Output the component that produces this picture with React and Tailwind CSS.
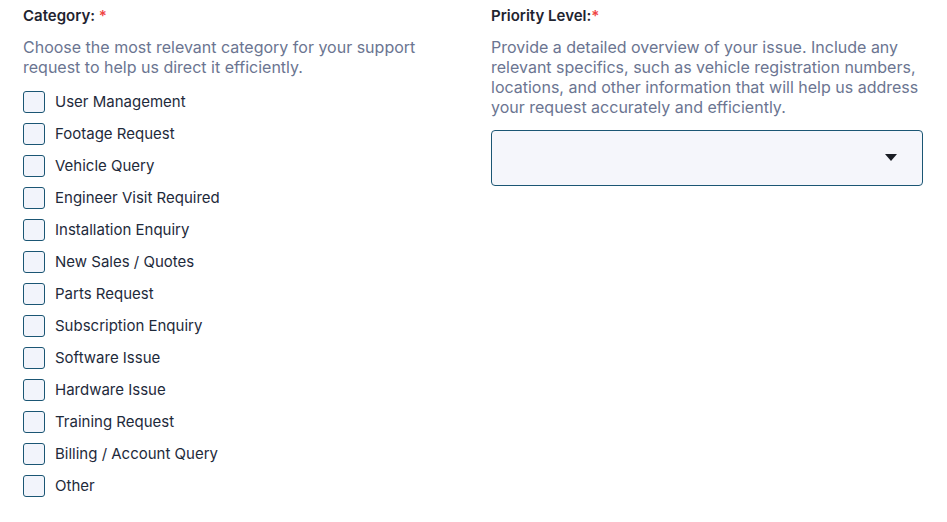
import React, { useState } from "react";

const categories = [
  "User Management",
  "Footage Request",
  "Vehicle Query",
  "Engineer Visit Required",
  "Installation Enquiry",
  "New Sales / Quotes",
  "Parts Request",
  "Subscription Enquiry",
  "Software Issue",
  "Hardware Issue",
  "Training Request",
  "Billing / Account Query",
  "Other",
];

export default function App() {
  const [checked, setChecked] = useState({});
  const [priority, setPriority] = useState("");

  const toggle = (name) => {
    setChecked((prev) => ({ ...prev, [name]: !prev[name] }));
  };

  return (
    <div
      className="min-h-screen bg-white pl-[23px] pr-[24px] pt-[6px]"
      style={{ fontFamily: "Inter, 'Noto Sans', sans-serif" }}
    >
      <div className="grid grid-cols-[437px_1fr] gap-x-[31px]">
        {/* Category */}
        <div>
          <label className="block text-[15px] leading-[20px] font-semibold text-[#1f2430]">
            Category: <span className="text-[#ef4444]">*</span>
          </label>
          <p className="mt-[11px] text-[16px] leading-[20px] text-[#6b7591]">
            Choose the most relevant category for your support request to help us direct it efficiently.
          </p>
          <div className="mt-[14px] flex flex-col gap-[10px]">
            {categories.map((c) => (
              <label key={c} className="flex items-center gap-[10px] cursor-pointer">
                <span
                  onClick={() => toggle(c)}
                  className="w-[22px] h-[22px] rounded-[3px] border-[1.5px] border-[#1b5674] bg-[#f2f4fb] flex items-center justify-center"
                >
                  {checked[c] && (
                    <svg viewBox="0 0 24 24" className="w-4 h-4" fill="none" stroke="#1b5674" strokeWidth="3">
                      <path d="M5 12l5 5L19 7" />
                    </svg>
                  )}
                </span>
                <span className="text-[15px] leading-[22px] text-[#1e2a3b]">{c}</span>
              </label>
            ))}
          </div>
        </div>

        {/* Priority */}
        <div>
          <label className="block text-[15px] leading-[20px] font-semibold text-[#1f2430]">
            Priority Level:<span className="text-[#ef4444]">*</span>
          </label>
          <p className="mt-[11px] text-[16px] leading-[20px] text-[#6b7591]">
            Provide a detailed overview of your issue. Include any relevant specifics, such as vehicle registration numbers, locations, and other information that will help us address your request accurately and efficiently.
          </p>
          <div className="relative mt-[13px]">
            <select
              value={priority}
              onChange={(e) => setPriority(e.target.value)}
              className="appearance-none w-full h-[56px] rounded-[4px] border border-[#1b5674] bg-[#f5f6fb] px-4 text-[15px] text-[#1e2a3b] outline-none"
            >
              <option value=""></option>
              <option value="low">Low</option>
              <option value="medium">Medium</option>
              <option value="high">High</option>
              <option value="urgent">Urgent</option>
            </select>
            <svg
              viewBox="0 0 12 7"
              className="pointer-events-none absolute right-[26px] top-[24px] w-[12px] h-[7px]"
            >
              <path d="M0 0h12L6 7z" fill="#1a1d24" />
            </svg>
          </div>
        </div>
      </div>
    </div>
  );
}
